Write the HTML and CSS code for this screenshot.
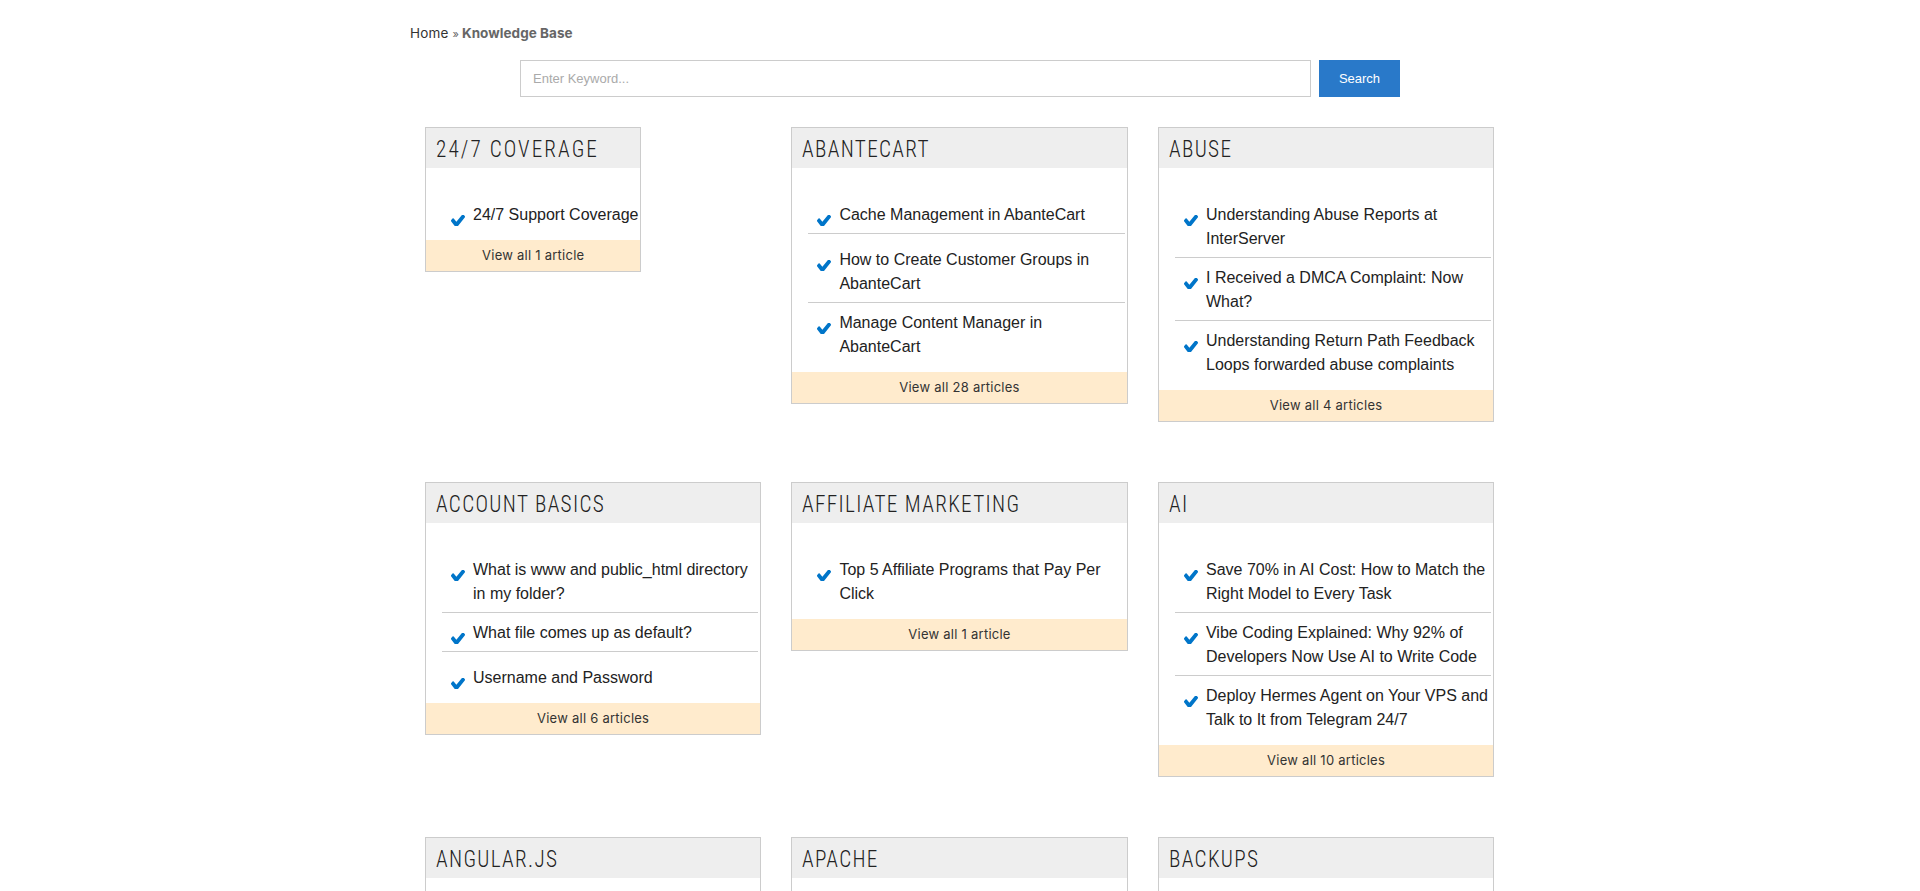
FILE: index.html
```html
<!DOCTYPE html>
<html lang="en">
<head>
    <meta charset="UTF-8">
    <meta name="viewport" content="width=device-width, initial-scale=1.0">
    <title>Knowledge Base</title>
    <link rel="stylesheet" href="styles.css">
</head>
<body>

    <svg class="icon-defs" width="0" height="0">
        <symbol id="check" viewBox="121 402 1550 988" preserveAspectRatio="none">
            <path d="M1671 566q0 40-28 68l-724 724-136 136q-28 28-68 28t-68-28l-136-136-362-362q-28-28-28-68t28-68l136-136q28-28 68-28t68 28l294 295 656-657q28-28 68-28t68 28l136 136q28 28 28 68z"/>
        </symbol>
    </svg>

    <div class="wrap">
        <div class="breadcrumb">
            <a href="#">Home</a> <span class="sep">»</span> <strong>Knowledge Base</strong>
        </div>

        <form class="search-form">
            <input type="text" class="search-input" placeholder="Enter Keyword...">
            <button type="button" class="search-btn">Search</button>
        </form>

        <div class="kb-grid">

            <div class="kb-card">
                <h3 class="kb-title kb-title-digits"><span>24/7 Coverage</span></h3>
                <ul class="kb-list">
                    <li class="short"><svg class="check"><use href="#check"/></svg><a href="#">24/7 Support Coverage</a></li>
                </ul>
                <a class="kb-more" href="#">View all 1 article</a>
            </div>

            <div class="kb-card">
                <h3 class="kb-title"><span>AbanteCart</span></h3>
                <ul class="kb-list">
                    <li class="short"><svg class="check"><use href="#check"/></svg><a href="#">Cache Management in AbanteCart</a></li>
                    <li><svg class="check"><use href="#check"/></svg><a href="#">How to Create Customer Groups in AbanteCart</a></li>
                    <li><svg class="check"><use href="#check"/></svg><a href="#">Manage Content Manager in AbanteCart</a></li>
                </ul>
                <a class="kb-more" href="#">View all 28 articles</a>
            </div>

            <div class="kb-card">
                <h3 class="kb-title"><span>Abuse</span></h3>
                <ul class="kb-list">
                    <li><svg class="check"><use href="#check"/></svg><a href="#">Understanding Abuse Reports at InterServer</a></li>
                    <li><svg class="check"><use href="#check"/></svg><a href="#">I Received a DMCA Complaint: Now What?</a></li>
                    <li><svg class="check"><use href="#check"/></svg><a href="#">Understanding Return Path Feedback Loops forwarded abuse complaints</a></li>
                </ul>
                <a class="kb-more" href="#">View all 4 articles</a>
            </div>

            <div class="kb-card">
                <h3 class="kb-title"><span>Account Basics</span></h3>
                <ul class="kb-list">
                    <li><svg class="check"><use href="#check"/></svg><a href="#">What is www and public_html directory in my folder?</a></li>
                    <li class="short"><svg class="check"><use href="#check"/></svg><a href="#">What file comes up as default?</a></li>
                    <li class="short"><svg class="check"><use href="#check"/></svg><a href="#">Username and Password</a></li>
                </ul>
                <a class="kb-more" href="#">View all 6 articles</a>
            </div>

            <div class="kb-card">
                <h3 class="kb-title"><span>Affiliate Marketing</span></h3>
                <ul class="kb-list">
                    <li><svg class="check"><use href="#check"/></svg><a href="#">Top 5 Affiliate Programs that Pay Per Click</a></li>
                </ul>
                <a class="kb-more" href="#">View all 1 article</a>
            </div>

            <div class="kb-card">
                <h3 class="kb-title"><span>AI</span></h3>
                <ul class="kb-list">
                    <li><svg class="check"><use href="#check"/></svg><a href="#">Save 70% in AI Cost: How to Match the Right Model to Every Task</a></li>
                    <li><svg class="check"><use href="#check"/></svg><a href="#">Vibe Coding Explained: Why 92% of Developers Now Use AI to Write Code</a></li>
                    <li><svg class="check"><use href="#check"/></svg><a href="#">Deploy Hermes Agent on Your VPS and Talk to It from Telegram 24/7</a></li>
                </ul>
                <a class="kb-more" href="#">View all 10 articles</a>
            </div>

            <div class="kb-card kb-card-cut">
                <h3 class="kb-title"><span>Angular.js</span></h3>
            </div>

            <div class="kb-card kb-card-cut">
                <h3 class="kb-title"><span>Apache</span></h3>
            </div>

            <div class="kb-card kb-card-cut">
                <h3 class="kb-title"><span>Backups</span></h3>
            </div>

        </div>
    </div>

</body>
</html>
```

FILE: styles.css
```css
body {
    margin: 0;
    background-color: #fff;
    font-family: "Liberation Sans", Arial, sans-serif;
    color: #222;
}

a {
    color: inherit;
    text-decoration: none;
}

.icon-defs {
    position: absolute;
}

.wrap {
    width: 1100px;
    margin: 0 auto;
}

.breadcrumb {
    box-sizing: border-box;
    height: 60px;
    padding-top: 24px;
    line-height: 18px;
    font-family: "Inter", sans-serif;
    font-size: 13.5px;
    letter-spacing: 0.15px;
    color: #666;
}

.breadcrumb a {
    color: #333;
}

.breadcrumb .sep {
    margin-right: -1px;
    font-size: 11px;
}

.breadcrumb strong {
    letter-spacing: 0.05px;
}

.search-form {
    display: flex;
    gap: 8px;
    padding-left: 110px;
    margin-bottom: 30px;
}

.search-input {
    width: 791px;
    height: 37px;
    box-sizing: border-box;
    padding: 0 12px;
    border: 1px solid #ccc;
    font-family: "Liberation Sans", Arial, sans-serif;
    font-size: 13px;
    outline: none;
}

.search-input::placeholder {
    color: #aaa;
}

.search-btn {
    width: 81px;
    height: 37px;
    border: none;
    background-color: #2979c9;
    color: #fff;
    font-family: "Liberation Sans", Arial, sans-serif;
    font-size: 13px;
}

.kb-grid {
    display: grid;
    grid-template-columns: 366.4px 366.6px 366.4px;
    grid-auto-rows: 355px;
    padding-left: 15px;
}

.kb-card {
    justify-self: start;
    align-self: start;
    max-width: 336.2px;
    box-sizing: border-box;
    border: 1px solid #ccc;
}

.kb-card-cut {
    width: 336.2px;
    min-height: 120px;
}

.kb-title {
    box-sizing: border-box;
    width: 0;
    min-width: 100%;
    height: 40px;
    margin: 0;
    padding: 2px 0 0 10px;
    background-color: #eee;
    font-family: "Roboto Condensed", "Roboto", sans-serif;
    font-size: 24px;
    font-stretch: 75%;
    font-weight: 300;
    line-height: 38px;
    letter-spacing: 1.5px;
    text-transform: uppercase;
    white-space: nowrap;
    color: #222;
}

.kb-title span {
    display: inline-block;
    transform: scaleX(0.884);
    transform-origin: left;
}

.kb-title-digits {
    letter-spacing: 2.35px;
}

.kb-list {
    list-style: none;
    margin: 0 2px 0 16px;
    padding: 27px 0 7px;
}

.kb-list li {
    display: flex;
    padding: 8px 0 6px 9px;
    font-size: 16px;
    line-height: 24px;
    border-bottom: 1px solid #ccc;
}

.kb-list li:last-child {
    border-bottom: none;
}

.kb-list li.short + li {
    padding-top: 14px;
}

.check {
    flex: none;
    width: 14px;
    height: 11px;
    margin: 12px 8px 0 0;
    fill: #0075c9;
}

.kb-more {
    display: block;
    height: 31px;
    background-color: #ffebcd;
    font-family: "Inter", sans-serif;
    font-size: 13px;
    line-height: 31px;
    letter-spacing: 0.25px;
    text-align: center;
    color: #333;
}
```
